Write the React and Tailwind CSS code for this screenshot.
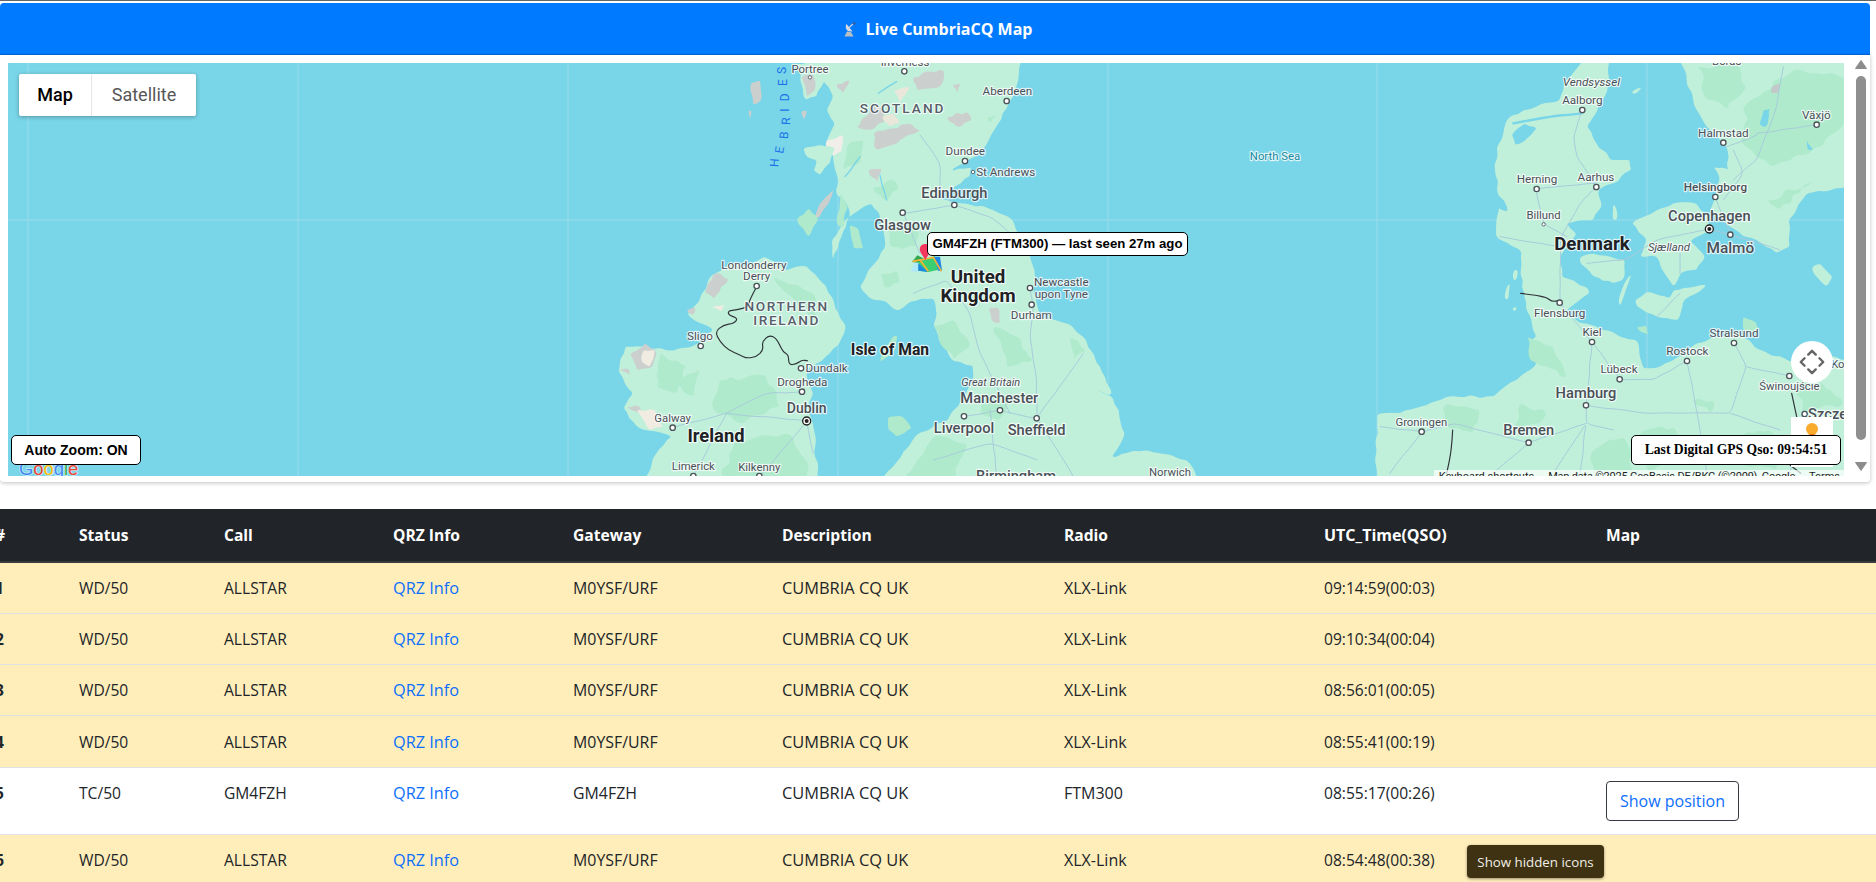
import React from "react";

const UI_FONT = "font-['Open_Sans','Noto_Sans',sans-serif]";

const rows = [
  ["1", "WD/50", "ALLSTAR", "M0YSF/URF", "XLX-Link", "09:14:59(00:03)"],
  ["2", "WD/50", "ALLSTAR", "M0YSF/URF", "XLX-Link", "09:10:34(00:04)"],
  ["3", "WD/50", "ALLSTAR", "M0YSF/URF", "XLX-Link", "08:56:01(00:05)"],
  ["4", "WD/50", "ALLSTAR", "M0YSF/URF", "XLX-Link", "08:55:41(00:19)"],
  ["5", "TC/50", "GM4FZH", "GM4FZH", "FTM300", "08:55:17(00:26)", true],
  ["6", "WD/50", "ALLSTAR", "M0YSF/URF", "XLX-Link", "08:54:48(00:38)"],
];

const W = "#79d5e8";
const L = "#c0f0da";
const G = "#aeeacb";
const R = "#a8cbda";
const K = "#cbd0cf";

// Turns a rough outline into a coastline: subdivide, nudge, then round off.
function organic(d, amp = 5, step = 18) {
  return d
    .split("M")
    .filter((s) => s.trim())
    .map((s) => {
      const n = s.match(/-?\d+(?:\.\d+)?/g).map(Number);
      const pts = [];
      for (let i = 0; i + 1 < n.length; i += 2) pts.push([n[i], n[i + 1]]);
      const closed = /Z/.test(s);
      const out = [];
      const count = closed ? pts.length : pts.length - 1;
      for (let i = 0; i < count; i++) {
        const a = pts[i];
        const b = pts[(i + 1) % pts.length];
        const dx = b[0] - a[0];
        const dy = b[1] - a[1];
        const len = Math.hypot(dx, dy) || 1;
        const k = Math.max(1, Math.round(len / step));
        for (let j = 0; j < k; j++) {
          const t = j / k;
          const px = a[0] + dx * t;
          const py = a[1] + dy * t;
          const h = Math.sin(px * 12.9898 + py * 78.233) * 43758.5453;
          const off = j === 0 ? 0 : (h - Math.floor(h) - 0.5) * 2 * amp;
          out.push([px - (dy / len) * off, py + (dx / len) * off]);
        }
      }
      const f = (v) => v.toFixed(1);
      const mid = (p, q) => `${f((p[0] + q[0]) / 2)} ${f((p[1] + q[1]) / 2)}`;
      if (closed) {
        let r = `M${mid(out[out.length - 1], out[0])}`;
        out.forEach((p, i) => {
          r += ` Q${f(p[0])} ${f(p[1])} ${mid(p, out[(i + 1) % out.length])}`;
        });
        return r + " Z";
      }
      const last = pts[pts.length - 1];
      out.push(last);
      let r = `M${f(out[0][0])} ${f(out[0][1])}`;
      for (let i = 1; i < out.length - 1; i++) r += ` Q${f(out[i][0])} ${f(out[i][1])} ${mid(out[i], out[i + 1])}`;
      return r + ` L${f(last[0])} ${f(last[1])}`;
    })
    .join(" ");
}

const Land = ({ d, fill = L, amp = 5, step = 18 }) => <path d={organic(d, amp, step)} fill={fill} />;
const Lines = ({ d, stroke = R, w = 3, amp = 2, step = 30 }) => (
  <path d={organic(d, amp, step)} stroke={stroke} strokeWidth={w} fill="none" strokeLinejoin="round" strokeLinecap="round" />
);

// [text, x, y, size, weight, italic, color, spacing]
const labelsA = [
  ["Portree", 630, 38, 34],
  ["Inverness", 915, 18, 34],
  ["SCOTLAND", 908, 158, 41, 500, 0, "#56606a", 6],
  ["Aberdeen", 1222, 105, 35],
  ["Dundee", 1096, 285, 35],
  ["St Andrews", 1217, 347, 35],
  ["Edinburgh", 1063, 413, 44, 500],
  ["Glasgow", 908, 510, 44, 500],
  ["United", 1134, 668, 56, 700, 0, "#202124"],
  ["Kingdom", 1134, 727, 56, 700, 0, "#202124"],
  ["Newcastle", 1384, 678, 35],
  ["upon Tyne", 1384, 713, 35],
  ["Durham", 1294, 776, 35],
  ["Londonderry", 462, 626, 35],
  ["Derry", 470, 661, 35],
  ["NORTHERN", 560, 752, 41, 500, 0, "#56606a", 5],
  ["IRELAND", 560, 796, 41, 500, 0, "#56606a", 5],
  ["Sligo", 300, 840, 35],
  ["Isle of Man", 870, 885, 47, 700, 0, "#202124"],
  ["Dundalk", 680, 937, 35],
  ["Drogheda", 607, 977, 35],
  ["Dublin", 620, 1060, 42, 500],
  ["Galway", 218, 1085, 34],
  ["Ireland", 348, 1145, 55, 700, 0, "#202124"],
  ["Limerick", 280, 1230, 34],
  ["Kilkenny", 478, 1232, 34],
  ["Great Britain", 1172, 978, 33, 400, 1],
  ["Manchester", 1198, 1030, 44, 500],
  ["Liverpool", 1092, 1120, 44, 500],
  ["Sheffield", 1310, 1126, 44, 500],
  ["Birmingham", 1248, 1262, 44, 500],
  ["Norwich", 1710, 1248, 34],
  ["North Sea", 2025, 300, 34, 400, 0, "#19899e"],
];

const labelsB = [
  ["Borås", 1040, 14, 34],
  ["Vendsyssel", 634, 78, 35, 400, 1],
  ["Aalborg", 607, 132, 35],
  ["Herning", 471, 368, 35],
  ["Aarhus", 648, 362, 35],
  ["Billund", 491, 477, 34],
  ["Denmark", 636, 570, 56, 700, 0, "#202124"],
  ["Sjælland", 867, 572, 34, 400, 1],
  ["Copenhagen", 988, 482, 44, 500],
  ["Malmö", 1051, 580, 46, 500],
  ["Helsingborg", 1006, 393, 35, 500],
  ["Halmstad", 1030, 230, 35],
  ["Växjö", 1309, 176, 35],
  ["Flensburg", 539, 772, 35],
  ["Kiel", 636, 828, 35],
  ["Lübeck", 717, 940, 35],
  ["Stralsund", 1062, 831, 35],
  ["Rostock", 922, 885, 35],
  ["Hamburg", 618, 1015, 44, 500],
  ["Bremen", 446, 1126, 44, 500],
  ["Groningen", 124, 1097, 34],
  ["Świnoujście", 1228, 989, 34],
  ["Kołobrzeg", 1430, 925, 34],
  ["Szczecin", 1372, 1078, 44, 500],
];

const dotsA = [[913,34],[1220,123],[1095,303],[1063,435],[908,458],[470,678],[1290,684],[1295,734],[302,858],[603,925],[606,995],[218,1103],[1092,1069],[1200,1051],[1310,1075],[280,1248],[478,1248]];
const smallA = [[630,52],[1119,336]];
const dotsB = [[607,150],[470,387],[649,381],[1051,524],[1006,411],[1030,248],[1310,194],[539,728],[636,846],[719,958],[1062,849],[921,903],[618,1036],[446,1148],[125,1115],[1228,948],[1274,1062]];

function Labels({ items }) {
  return items.map(([t, x, y, s, w = 400, i = 0, c = "#4a5058", sp = 0]) => (
    <text
      key={t}
      x={x}
      y={y}
      fontSize={s}
      fontWeight={w}
      fontStyle={i ? "italic" : "normal"}
      fill={c}
      letterSpacing={sp}
      textAnchor="middle"
      stroke="#fff"
      strokeWidth={7}
      strokeOpacity={0.75}
      strokeLinejoin="round"
      className="[paint-order:stroke] font-['Roboto',sans-serif]"
    >
      {t}
    </text>
  ));
}

function Dots({ items, small }) {
  return items.map(([x, y]) => (
    <circle key={x + "-" + y} cx={x} cy={y} r={small ? 5 : 8} fill="#fff" stroke="#4b5258" strokeWidth={small ? 2.5 : 4} />
  ));
}

function Capital({ x, y }) {
  return (
    <g>
      <circle cx={x} cy={y} r={12} fill="#fff" stroke="#222" strokeWidth={4} />
      <circle cx={x} cy={y} r={6} fill="#222" />
    </g>
  );
}

function PinIcon() {
  return (
    <g>
      <path d="M932 634 L945 602 L956 606 L955 636 Z" fill="#aeeaf7" />
      <path d="M936 606 L952 586 L976 598 L956 608 Z" fill="#34a853" />
      <path d="M956 606 L978 598 L1004 588 L1014 630 L985 636 L955 632 Z" fill="#3ccf72" />
      <path d="M955 610 L984 636 L955 632 Z" fill="#1e88e5" />
      <path d="M1002 590 L1020 590 L1026 632 L1014 632 Z" fill="#1e88e5" />
      <path d="M938 604 L960 600 L985 634 M960 600 L1000 592 L1024 634" fill="none" stroke="#f9b233" strokeWidth={5} />
      <path d="M975 552 C962 552 958 564 960 572 C963 582 971 590 976 600 C981 590 990 580 992 570 C993 560 985 552 975 552 Z" fill="#f4375f" />
    </g>
  );
}

function UkLand() {
  return (
    <g>
      {/* Great Britain */}
      <Land d="M640 0 L675 70 L700 110 L680 150 L705 190 L680 245 L700 300 L715 355 L710 405 L740 430 L750 470 L725 530 L700 600 L695 540 L735 480 L790 440 L815 430 L840 470 L855 565 L815 620 L780 680 L810 715 L860 725 L890 752 L930 725 L1000 715 L1010 765 L1000 795 L1030 850 L1060 905 L1118 915 L1120 950 L1095 1010 L1045 1078 L1000 1100 L945 1130 L890 1205 L840 1262 L1800 1262 L1760 1200 L1640 1170 L1580 1180 L1535 1190 L1575 1120 L1540 1015 L1480 990 L1535 1005 L1505 935 L1450 830 L1400 790 L1325 770 L1300 695 L1305 650 L1290 590 L1262 525 L1225 470 L1165 445 L1090 430 L1000 415 L1040 395 L1110 350 L1115 322 L1055 330 L1125 290 L1165 245 L1195 190 L1225 130 L1255 60 L1265 0 Z" />
      {/* darker green */}
      <Land
        fill={G}
        amp={9}
        d="M715 500 L720 400 L745 440 L735 500 Z M820 380 L880 360 L895 390 L850 420 Z M1000 800 L1060 780 L1110 860 L1060 900 Z M1180 800 L1250 830 L1300 900 L1220 920 Z M840 640 L890 630 L900 670 L850 680 Z M1000 1130 L1100 1150 L1060 1262 L900 1262 Z M1160 1000 L1230 1010 L1200 1080 L1140 1060 Z M1400 820 L1460 870 L1420 900 Z M860 500 L960 490 L950 560 L870 560 Z M740 260 L790 240 L780 310 L730 330 Z M1160 170 L1190 160 L1170 190 Z"
      />
      {/* highland rock */}
      <Land
        fill={K}
        amp={7}
        step={14}
        d="M820 220 L880 205 L930 190 L960 210 L900 240 L860 260 L830 270 Z M1040 170 L1100 155 L1115 180 L1070 200 Z M1055 75 L1085 70 L1075 100 Z M940 50 L1030 30 L1020 80 L950 90 Z M770 200 L830 130 L860 175 L810 210 Z M805 330 L845 325 L835 365 L810 350 Z M710 70 L750 60 L730 100 Z"
      />
      <Land fill="#f0eee6" amp={4} step={14} d="M680 240 L730 225 L725 275 L700 290 L680 265 Z" />
      <Land fill="#e9e6da" amp={4} step={14} d="M845 170 L880 160 L900 190 L870 200 Z M880 90 L930 80 L900 130 Z" />
      <Land fill={K} amp={3} step={14} d="M1165 745 L1198 745 L1200 790 L1178 785 Z" />
      {/* Firths and lochs */}
      <Lines stroke={W} w={4} d="M835 100 L890 65 M735 350 L780 290 M840 345 L860 420 M1060 330 L1098 315" />
      {/* Outer Hebrides */}
      <Land fill={K} amp={3} step={14} d="M452 70 L480 60 L484 120 L460 135 L456 105 Z M444 155 L454 150 L450 178 Z" />
      {/* Rum, Skye */}
      <Land fill={K} amp={2} step={14} d="M602 155 L622 150 L612 180 Z" />
      <Land amp={6} step={14} d="M590 10 L680 0 L700 40 L670 70 L650 110 L620 120 L600 60 Z" />
      <Land fill={K} amp={4} step={14} d="M605 50 L640 45 L645 90 L620 110 Z" />
      {/* Mull */}
      <Land amp={5} step={14} d="M610 265 L660 255 L705 265 L690 310 L660 345 L640 330 L650 300 L620 290 Z" />
      {/* Jura */}
      <Land fill={K} amp={2} step={14} d="M660 430 L700 388 L690 420 L655 475 L645 470 Z" />
      {/* Islay */}
      <Land fill={G} amp={5} step={14} d="M590 480 L630 445 L655 480 L625 530 L610 505 Z" />
      {/* Arran */}
      <Land fill={G} amp={2} step={14} d="M748 495 L775 505 L790 565 L760 565 Z" />
      {/* Isle of Man */}
      <Land fill={G} amp={2} step={14} d="M880 828 L892 826 L882 880 L840 905 L850 870 Z" />
      {/* Anglesey */}
      <Land fill={G} amp={3} step={14} d="M865 1070 L905 1068 L935 1105 L890 1130 L865 1110 Z" />
      {/* Ireland */}
      <Land d="M490 590 L560 632 L620 618 L680 680 L705 745 L738 800 L722 840 L690 880 L650 910 L620 935 L640 1000 L625 1030 L640 1100 L655 1262 L130 1262 L170 1180 L215 1130 L150 1112 L110 1100 L70 1045 L100 1000 L55 935 L75 860 L140 860 L220 872 L290 852 L340 812 L262 762 L300 720 L330 650 L390 610 L440 622 Z" />
      <Land fill={G} amp={9} d="M180 880 L260 920 L230 1000 L170 980 Z M360 960 L500 950 L540 1040 L430 1090 L340 1050 Z M400 1150 L560 1120 L620 1200 L620 1262 L360 1262 Z M520 650 L640 700 L650 780 L560 700 Z M210 960 L300 930 L280 1010 Z" />
      <Land fill={K} amp={5} step={12} d="M315 700 L345 640 L385 655 L345 715 Z M260 750 L285 740 L280 765 Z M90 880 L135 850 L170 880 L150 925 L110 930 Z M55 930 L85 925 L90 945 Z M80 1040 L120 1040 L130 1070 Z" />
      <Land fill="#f0ece2" amp={4} step={12} d="M325 740 L375 735 L365 755 Z M130 870 L165 870 L150 920 L125 905 Z M110 1050 L165 1050 L190 1100 L150 1110 Z" />
      {/* Roads */}
      <Lines d="M910 460 L1063 435 L1170 470 L1230 520 M960 225 L1020 310 L1020 390 L1063 435 M910 460 L960 580 M1230 1060 L1140 880 L1110 760 L1040 660 L940 700 M1290 684 L1300 735 L1290 830 L1310 960 L1310 1075 M1310 1075 L1420 1250 M1200 1051 L1092 1069 M1200 1051 L1310 1075 L1450 880 M1190 1250 L1170 1050 M1000 1200 L1170 1150 L1310 1200 M380 1060 L620 1083 M218 1103 L380 1060 L500 1000 L606 995 M620 1083 L480 1250 M620 1083 L640 1180 M280 1248 L380 1060" />
      {/* Borders */}
      <Lines
        stroke="#2f3338"
        w={3.5}
        amp={1}
        step={60}
        d="M470 680 L448 720 L445 740 L410 750 L385 752 L385 765 L414 775 L402 790 L370 795 L345 815 L360 845 L385 870 L420 885 L440 895 L470 890 L490 870 L486 845 L508 825 L530 835 L548 875 L566 885 L566 915 L590 912 L605 900 L622 902"
      />
    </g>
  );
}

function EuLand() {
  return (
    <g>
      <Land d="M610 0 L560 60 L540 120 L430 150 L380 180 L365 240 L350 260 L345 330 L360 420 L348 530 L425 575 L425 680 L445 760 L470 830 L450 850 L470 910 L410 960 L340 1010 L200 1010 L140 1035 L60 1060 L-10 1064 L-10 1262 L1400 1262 L1400 900 L1350 890 L1230 905 L1140 870 L1080 820 L1000 830 L920 870 L840 920 L790 925 L770 840 L720 830 L650 800 L600 790 L560 750 L630 700 L620 680 L545 650 L540 590 L590 520 L560 490 L640 480 L665 440 L655 390 L700 370 L755 330 L750 300 L690 300 L650 250 L620 200 L640 170 L680 100 L690 0 Z" />
      <Lines stroke={W} w={7} d="M400 190 L500 172 L605 160" />
      <Land fill={W} amp={4} step={14} d="M395 225 L435 190 L470 205 L430 245 L405 255 Z M352 400 L372 420 L382 455 L358 448 Z" />
      {/* Sweden */}
      <Land d="M900 0 L920 60 L950 150 L990 210 L1040 260 L1045 330 L1000 320 L1020 360 L990 450 L1050 500 L1090 530 L1130 540 L1190 580 L1230 560 L1225 480 L1280 400 L1400 380 L1400 0 Z" />
      <Land fill={G} amp={14} step={22} d="M950 20 L1060 10 L1100 80 L1040 150 L980 120 Z M1100 130 L1240 30 L1400 60 L1400 180 L1290 280 L1170 320 L1080 240 Z M1160 420 L1300 360 L1260 400 L1200 450 Z" />
      <Land fill="#c3c9c8" amp={2} step={14} d="M1175 80 L1202 70 L1195 100 L1172 100 Z" />
      <Land fill={W} amp={3} step={12} d="M1150 150 L1170 145 L1160 200 L1140 195 Z M1280 240 L1300 270 L1285 270 Z" />
      {/* Funen */}
      <Land amp={4} d="M600 590 L640 580 L735 600 L730 660 L700 670 L640 650 L600 610 Z" />
      {/* Zealand */}
      <Land amp={4} d="M755 490 L830 450 L880 430 L950 430 L985 470 L990 510 L930 545 L975 590 L950 630 L900 640 L880 680 L860 650 L830 590 L780 590 L800 540 Z" />
      {/* Lolland, Falster */}
      <Land amp={3} d="M765 720 L800 695 L870 715 L880 690 L980 675 L950 700 L910 720 L895 780 L830 770 L770 740 Z" />
      <Land amp={1} step={30} d="M755 640 L720 740 L715 720 L735 665 Z M700 430 L712 450 L712 480 L698 480 Z M400 630 L415 630 L410 660 L398 660 Z M380 680 L390 670 L385 720 L372 715 Z M395 745 L412 740 L405 755 Z M752 95 L790 78 L765 105 Z" />
      {/* Bornholm */}
      <Land amp={2} d="M1295 620 L1320 610 L1358 650 L1340 680 L1300 640 Z" />
      {/* Rügen */}
      <Land fill={G} amp={3} step={14} d="M1090 770 L1130 790 L1140 820 L1090 810 Z M770 800 L800 795 L805 825 L780 815 Z" />
      {/* Green patches */}
      <Land fill={G} amp={10} d="M440 830 L520 860 L560 950 L450 900 Z M780 1120 L880 1100 L900 1200 L800 1230 Z M1050 1130 L1170 1110 L1190 1230 L1050 1200 Z M420 1030 L500 1060 L480 1090 L400 1100 Z M200 1030 L300 1050 L280 1120 L180 1100 Z M940 1020 L1000 1020 L990 1060 Z M1240 980 L1330 970 L1390 1030 L1280 1060 Z M640 1170 L730 1130 L760 1240 L640 1240 Z" />
      {/* Roads */}
      <Lines d="M607 150 L580 230 L590 290 L650 380 L600 430 L540 540 L540 730 L636 846 L619 1036 L619 1090 L700 1110 M470 387 L650 370 M360 530 L540 560 M470 400 L490 490 L560 530 M636 846 L719 958 L820 960 L921 903 L940 1000 L980 1240 M619 1036 L800 1060 L1050 1060 L1100 920 L1062 849 M1100 920 L1228 948 M619 1090 L446 1148 L220 1090 L126 1115 L30 1240 M446 1148 L340 1240 M126 1115 L0 1100 M1006 411 L1052 524 L1200 570 M1060 270 L1090 340 L1030 420 M1210 20 L1190 140 L1130 300 L1060 360 M1130 220 L1310 194 M1040 260 L1130 225 M1052 524 L990 507 L830 540 L735 600 L620 610 M900 580 L900 640 M900 700 L830 770 M1270 1050 L1230 1240 M1050 1060 L1200 1110 M600 1240 L619 1090 L520 1240" />
      {/* Borders */}
      <Lines
        stroke="#2f3338"
        w={3.5}
        amp={1}
        step={60}
        d="M422 700 L460 705 L500 712 L515 725 L538 722 M218 1110 L215 1170 L200 1240 M1235 1000 L1250 1070 M1230 1215 L1262 1240"
      />
    </g>
  );
}

function MapSvg() {
  const grid = [28, 298, 568, 838, 1108, 1377, 1647];
  const hebrides = [
    ["H", 535, 322, -86],
    ["E", 549, 282, -80],
    ["B", 563, 238, -85],
    ["R", 570, 195, -88],
    ["I", 566, 155, -90],
    ["D", 566, 124, -90],
    ["E", 562, 78, -90],
    ["S", 558, 42, -90],
  ];
  return (
    <svg viewBox="8 63 1836 413" className="block h-full w-full">
      <rect x="8" y="63" width="1836" height="413" fill={W} />
      {grid.map((x) => (
        <line key={x} x1={x} x2={x} y1="63" y2="476" stroke="#9bdcec" strokeWidth="1" />
      ))}
      <line x1="8" x2="1844" y1="220" y2="220" stroke="#9bdcec" strokeWidth="1" />
      <g transform="translate(600 60) scale(0.33333)">
        <UkLand />
      </g>
      <g transform="translate(1380 60) scale(0.33333)">
        <EuLand />
      </g>
      <g transform="translate(600 60) scale(0.33333)">
        <Dots items={dotsA} />
        <Dots items={smallA} small />
        <Capital x={620} y={1083} />
        <Labels items={labelsA} />
        {hebrides.map(([c, x, y, a], i) => (
          <text
            key={i}
            x={x}
            y={y}
            fontSize={36}
            fill="#1a73e8"
            transform={`rotate(${a} ${x} ${y})`}
            className="font-['Roboto',sans-serif]"
          >
            {c}
          </text>
        ))}
        <PinIcon />
      </g>
      <g transform="translate(1380 60) scale(0.33333)">
        <Dots items={dotsB} />
        <Dots items={[[491, 493]]} small />
        <Capital x={988} y={507} />
        <Labels items={labelsB} />
      </g>
      <text x="19" y="474.5" fontSize="18.4" stroke="#fff" strokeWidth="1.5" strokeOpacity="0.6" className="[paint-order:stroke] font-['Liberation_Sans',sans-serif]">
        <tspan fill="#4285f4">G</tspan>
        <tspan fill="#ea4335">o</tspan>
        <tspan fill="#fbbc05">o</tspan>
        <tspan fill="#4285f4">g</tspan>
        <tspan fill="#34a853">l</tspan>
        <tspan fill="#ea4335">e</tspan>
      </text>
    </svg>
  );
}

function Dish() {
  return (
    <svg viewBox="0 0 14 16" className="h-[16px] w-[14px] shrink-0">
      <path d="M3.5 3 C1.5 7 3.5 11 9.5 10.5 Z" fill="#d9dde0" />
      <path d="M5.5 7 L10.5 2.5" stroke="#cfd4d8" strokeWidth="1.2" />
      <circle cx="11" cy="2.2" r="1.5" fill="#2f62a8" />
      <path d="M4 10.5 L8 11 L10.5 15.5 L1.5 15.5 Z" fill="#b9bec3" />
    </svg>
  );
}

function Arrow({ up }) {
  return (
    <svg viewBox="0 0 12 9" className="h-[9px] w-[12px] shrink-0">
      <path d={up ? "M6 0.5 L11.5 8.5 L0.5 8.5 Z" : "M6 8.5 L11.5 0.5 L0.5 0.5 Z"} fill="#8c8c8c" stroke="#8c8c8c" strokeLinejoin="round" />
    </svg>
  );
}

function Pegman() {
  return (
    <svg viewBox="0 0 20 24" className="h-[24px] w-[20px]">
      <circle cx="10" cy="7" r="6" fill="#f9ab2e" />
      <path d="M3 20 C3 14 6 12 10 12 C14 12 17 14 17 20 L17 24 L3 24 Z" fill="#e8741a" />
    </svg>
  );
}

function MoveIcon() {
  return (
    <svg viewBox="0 0 30 30" className="h-[28px] w-[28px]">
      <path
        d="M15 3 L19 7 M15 3 L11 7 M15 27 L19 23 M15 27 L11 23 M3 15 L7 11 M3 15 L7 19 M27 15 L23 11 M27 15 L23 19"
        stroke="#666"
        strokeWidth="2.6"
        strokeLinecap="round"
        fill="none"
      />
    </svg>
  );
}

function MapCard() {
  return (
    <div className="relative h-[413px] w-[1836px] shrink-0 overflow-hidden font-['Roboto',sans-serif]">
      <MapSvg />

      <div className="absolute left-[11px] top-[11px] flex h-[42px] w-[177px] overflow-hidden rounded-[2px] bg-white text-[18px] shadow-[0_1px_4px_rgba(0,0,0,0.3)]">
        <div className="flex w-[73px] items-center justify-center border-r border-[#e6e6e6] font-medium text-black">Map</div>
        <div className="flex flex-1 items-center justify-center text-[#565656]">Satellite</div>
      </div>

      <div className="absolute bottom-[11px] left-[3px] flex h-[30px] w-[130px] items-center justify-center rounded-[5px] border border-black bg-white font-['Liberation_Sans',sans-serif] text-[14px] font-bold text-black">
        Auto Zoom: ON
      </div>

      <div className="absolute left-[919px] top-[169px] flex h-[24px] w-[261px] items-center justify-center whitespace-nowrap rounded-[5px] border border-black bg-white font-['Liberation_Sans',sans-serif] text-[13.2px] font-bold text-black">
        GM4FZH (FTM300) — last seen 27m ago
      </div>

      <div className="absolute left-[1783px] top-[354px] flex h-[50px] w-[42px] justify-center bg-white pt-[5px]">
        <Pegman />
      </div>

      <div className="absolute left-[1783px] top-[278px] flex h-[42px] w-[42px] items-center justify-center rounded-full bg-white">
        <MoveIcon />
      </div>

      <div className="absolute bottom-[-8px] right-0 flex h-[14px] items-center whitespace-nowrap bg-white/70 text-[11px] leading-[14px] text-[#1f1f1f]">
        <span className="pl-[5px] pr-[14px]">Keyboard shortcuts</span>
        <span className="pr-[14px] tracking-[-0.22px]">Map data ©2025 GeoBasis-DE/BKG (©2009), Google</span>
        <span className="pr-[4px]">Terms</span>
      </div>

      <div className="absolute bottom-[11px] left-[1623px] flex h-[30px] w-[210px] items-center justify-center rounded-[5px] border border-black bg-white font-['Liberation_Serif',serif] text-[13.65px] font-bold text-black">
        Last Digital GPS Qso: 09:54:51
      </div>
    </div>
  );
}

const th = "px-3 text-left font-bold";
const td = "px-3";

function Row({ r }) {
  const big = r[6];
  const cls = `${td} ${big ? "pt-[13px] pb-[13px] align-top" : "align-middle"}`;
  return (
    <tr className={`border-b border-[#dee2e6] ${big ? "h-[66px] bg-white" : "h-[51.33px] bg-[#ffeeba]"}`}>
      <td className={`${cls} font-bold`}>{r[0]}</td>
      <td className={cls}>{r[1]}</td>
      <td className={cls}>{r[2]}</td>
      <td className={`${cls} text-[16.3px]`}>
        <a className="text-[#0d6efd]" href="#">QRZ Info</a>
      </td>
      <td className={`${cls} text-[15.9px]`}>{r[3]}</td>
      <td className={`${cls} text-[16.4px]`}>CUMBRIA CQ UK</td>
      <td className={`${cls} text-[16px]`}>{r[4]}</td>
      <td className={cls}>{r[5]}</td>
      <td className={cls}>
        {big ? (
          <button className="box-border h-[40px] w-[133px] rounded-[4px] border border-[#343a40] text-center text-[16px] text-[#0d6efd]">Show position</button>
        ) : null}
      </td>
    </tr>
  );
}

export default function App() {
  return (
    <div className={`relative h-[882px] w-[1876px] overflow-hidden bg-white text-[15.6px] leading-6 text-[#212529] ${UI_FONT}`}>
      <div className="h-[1px] bg-[#666666]" />
      <div className="h-[2px]" />
      <div className="w-[1870px]">
        <div className="flex h-[52px] items-center justify-center gap-[9px] rounded-t-[4px] border-b border-[#0069d9] bg-[#007bff] pl-[5px] text-white">
          <Dish />
          <span className="text-[16px] font-bold">Live CumbriaCQ Map</span>
        </div>
        <div className="flex rounded-b-[4px] bg-white pb-[6px] pl-[8px] pt-[8px] shadow-[0_1px_4px_rgba(0,0,0,0.25)]">
          <MapCard />
          <div className="flex w-[26px] -mt-[3px] flex-col items-center pl-[11px] pr-[3px]">
            <Arrow up />
            <div className="mt-[7px] h-[364px] w-[10px] rounded-full bg-[#8f8f8f]" />
            <div className="mt-[22px]">
              <Arrow />
            </div>
          </div>
        </div>
      </div>

      <div className="mt-[27px]">
        <table className="-ml-[17px] w-[1893px] table-fixed border-collapse">
          <colgroup>
            <col className="w-[84px]" />
            <col className="w-[145px]" />
            <col className="w-[169px]" />
            <col className="w-[180px]" />
            <col className="w-[209px]" />
            <col className="w-[282px]" />
            <col className="w-[260px]" />
            <col className="w-[282px]" />
            <col className="w-[282px]" />
          </colgroup>
          <thead>
            <tr className="h-[53px] border-b-2 border-[#373b3e] bg-[#212529] text-white">
              {["#", "Status", "Call", "QRZ Info", "Gateway", "Description", "Radio", "UTC_Time(QSO)", "Map"].map((h) => (
                <th key={h} className={`${th} ${h === "UTC_Time(QSO)" ? "text-[16px]" : ""}`}>{h}</th>
              ))}
            </tr>
          </thead>
          <tbody>
            {rows.map((r) => (
              <Row key={r[0]} r={r} />
            ))}
          </tbody>
        </table>
      </div>

      <div className="absolute left-[1467px] top-[845px] flex h-[33px] w-[137px] items-center justify-center whitespace-nowrap rounded-[4px] bg-[#3f3213] text-[13.3px] text-[#f0eee6] shadow-[0_1px_3px_rgba(0,0,0,0.4)]">
        Show hidden icons
      </div>
    </div>
  );
}
